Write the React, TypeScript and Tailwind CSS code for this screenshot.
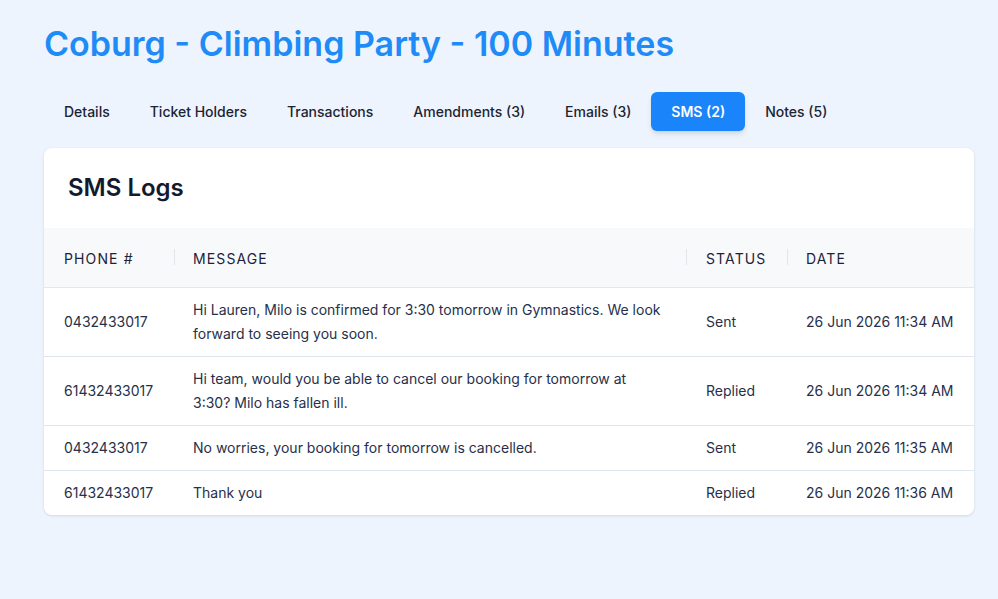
const tabs = ['Details', 'Ticket Holders', 'Transactions', 'Amendments (3)', 'Emails (3)', 'SMS (2)', 'Notes (5)']

interface SmsLog {
  phone: string
  message: string
  status: 'Sent' | 'Replied'
  date: string
}

const logs: SmsLog[] = [
  {
    phone: '0432433017',
    message: 'Hi Lauren, Milo is confirmed for 3:30 tomorrow in Gymnastics. We look forward to seeing you soon.',
    status: 'Sent',
    date: '26 Jun 2026 11:34 AM',
  },
  {
    phone: '61432433017',
    message: 'Hi team, would you be able to cancel our booking for tomorrow at 3:30? Milo has fallen ill.',
    status: 'Replied',
    date: '26 Jun 2026 11:34 AM',
  },
  {
    phone: '0432433017',
    message: 'No worries, your booking for tomorrow is cancelled.',
    status: 'Sent',
    date: '26 Jun 2026 11:35 AM',
  },
  {
    phone: '61432433017',
    message: 'Thank you',
    status: 'Replied',
    date: '26 Jun 2026 11:36 AM',
  },
]

export default function App() {
  const active = 'SMS (2)'

  return (
    <div className="min-h-[599px] bg-[#edf4fe] pl-11 pr-6 pt-6 pb-10 font-['Inter',sans-serif]">
      <h1 className="text-[34px] leading-[40px] font-semibold text-[#1f8bf6]">
        Coburg - Climbing Party - 100 Minutes
      </h1>

      <div className="mt-7 flex items-center">
        {tabs.map(tab =>
          tab === active ? (
            <button
              key={tab}
              className="h-[39px] rounded-md bg-[#1a84fb] px-5 text-sm font-semibold text-white shadow-md"
            >
              {tab}
            </button>
          ) : (
            <button key={tab} className="h-[39px] px-5 text-sm font-medium text-[#1c2433]">
              {tab}
            </button>
          )
        )}
      </div>

      <div className="mt-[17px] overflow-hidden rounded-lg bg-white shadow-[0_1px_3px_rgba(15,23,42,0.12)]">
        <div className="flex h-20 items-center px-6">
          <h2 className="text-2xl font-semibold text-[#141a2e]">SMS Logs</h2>
        </div>

        <table className="w-full table-fixed border-collapse text-sm text-[#27304a]">
          <colgroup>
            <col className="w-[130px]" />
            <col />
            <col className="w-[101px]" />
            <col className="w-[187px]" />
          </colgroup>
          <thead>
            <tr className="h-[59px] border-b border-[#e3e7ee] bg-[#f8f9fb] text-left text-sm uppercase tracking-[0.08em] text-[#1c2238]">
              <th className="px-5 pt-[3px] font-normal">Phone #</th>
              <th className="relative pl-[19px] pr-5 pt-[3px] font-normal">
                <span className="absolute left-0 top-1/2 h-4 w-px -translate-y-1/2 bg-[#e2e5ea]" />
                Message
              </th>
              <th className="relative px-5 pt-[3px] font-normal">
                <span className="absolute left-0 top-1/2 h-4 w-px -translate-y-1/2 bg-[#e2e5ea]" />
                Status
              </th>
              <th className="relative pl-[19px] pr-5 pt-[3px] font-normal">
                <span className="absolute left-0 top-1/2 h-4 w-px -translate-y-1/2 bg-[#e2e5ea]" />
                Date
              </th>
            </tr>
          </thead>
          <tbody>
            {logs.map((log, i) => (
              <tr key={i} className="border-b border-[#dfe5ec] last:border-b-0">
                <td className="px-5 py-2.5 leading-6">{log.phone}</td>
                <td className="pl-[19px] pr-5 py-2.5 leading-6">{log.message}</td>
                <td className="px-5 py-2.5 leading-6">{log.status}</td>
                <td className="pl-[19px] pr-5 py-2.5 leading-6 whitespace-nowrap">{log.date}</td>
              </tr>
            ))}
          </tbody>
        </table>
      </div>
    </div>
  )
}
